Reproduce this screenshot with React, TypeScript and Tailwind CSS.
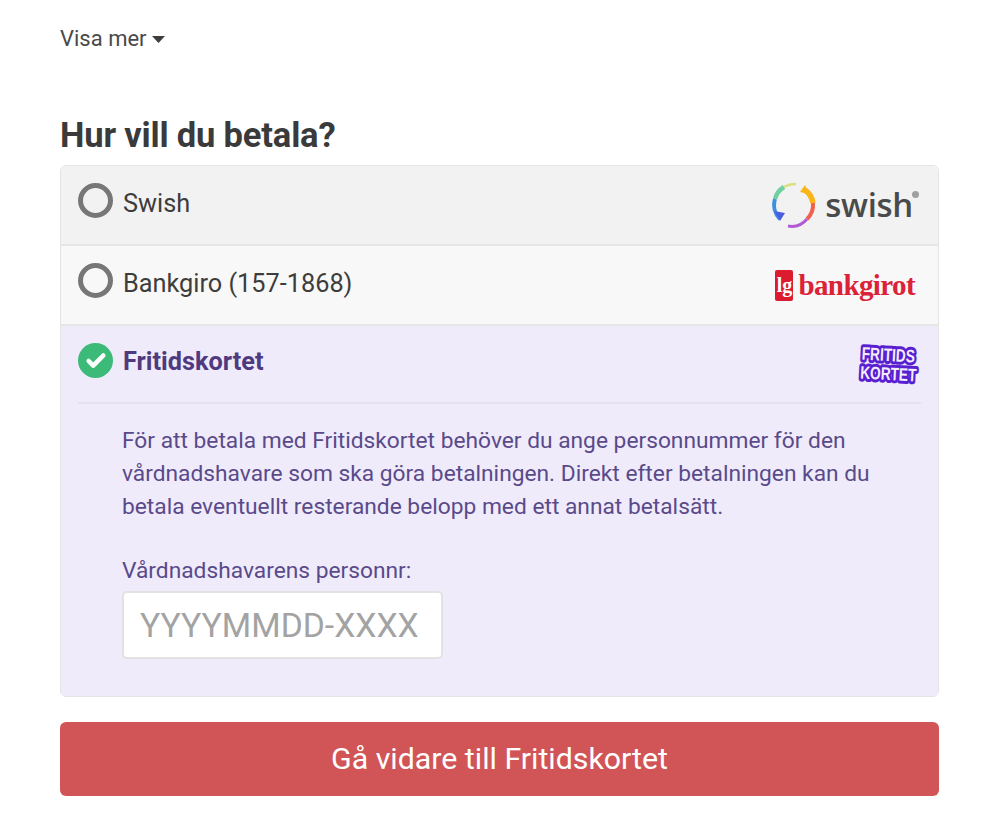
import React from 'react';
import { Check } from 'lucide-react';

const SwishLogo = () => (
  <div className="mr-[4px] flex items-center gap-[9px]">
    <svg width="44" height="46" viewBox="0 0 44 46" fill="none" strokeWidth="4.5">
      <path d="M8 37 A20 20 0 0 1 3 17" stroke="#3f8fe0" strokeWidth="4" />
      <path d="M3 17 A20 20 0 0 1 12 5" stroke="#6fd0a0" />
      <path d="M12 5 A20 20 0 0 1 24 2" stroke="#dcdf80" strokeWidth="2.5" />
      <path d="M33 8 A20 20 0 0 1 41 21" stroke="#fbb416" strokeWidth="5.5" />
      <path d="M41 21 A20 20 0 0 1 35 37" stroke="#f0604c" strokeWidth="4" />
      <path d="M35 37 A20 20 0 0 1 16 44" stroke="#b25ad6" strokeWidth="3" />
      <path d="M2 29 L13 31 L8 39 Z" fill="#4a5fe0" stroke="none" />
      <path d="M28 10 L33 3 L37 12 Z" fill="#fbb416" stroke="none" />
    </svg>
    <span className="relative mb-[2px] font-['Open_Sans',sans-serif] text-[33px] font-semibold leading-none tracking-[-0.3px] text-[#4a4a4a]">
      swish
      <span className="absolute right-[-6px] top-[3px] h-[7px] w-[7px] rounded-full bg-[#a0a0a0]" />
    </span>
  </div>
);

const BankgirotLogo = () => (
  <div className="mr-[2px] flex items-center gap-[5px]">
    <div className="flex h-[31px] w-[18px] items-center justify-center rounded-[2px] bg-[#dc1c2e] font-['Liberation_Serif',serif] text-[20px] font-bold leading-none text-white">
      lg
    </div>
    <span className="font-['Liberation_Serif',serif] text-[29px] font-bold leading-none tracking-[-0.6px] text-[#dc2238]">
      bankgirot
    </span>
  </div>
);

const FritidsLogo = () => (
  <svg width="66" height="44" viewBox="0 0 66 44" className="font-['Liberation_Sans',sans-serif] font-bold">
    <text transform="translate(33 19) rotate(3) scale(0.76 1)" textAnchor="middle" fontSize="18" fill="#f2eefd" stroke="#5a1fd0" strokeWidth="6" strokeLinejoin="round" style={{ paintOrder: 'stroke' }}>
      FRITIDS
    </text>
    <text transform="translate(33 38) rotate(3) scale(0.76 1)" textAnchor="middle" fontSize="18" fill="#f2eefd" stroke="#5a1fd0" strokeWidth="6" strokeLinejoin="round" style={{ paintOrder: 'stroke' }}>
      KORTET
    </text>
  </svg>
);

const Radio = () => (
  <span className="h-[35px] w-[35px] shrink-0 rounded-full border-[5px] border-[#777777]" />
);

const Row = ({ label, logo, bg }: { label: string; logo: React.ReactNode; bg: string }) => (
  <div className={`flex h-[80px] items-center justify-between border-b-2 border-[#e6e6e6] pl-[17px] pr-[21px] ${bg}`}>
    <div className="flex items-center gap-[10px] pb-[9px]">
      <Radio />
      <span className="pt-[7px] text-[25.3px] text-[#3d3d3d]">{label}</span>
    </div>
    {logo}
  </div>
);

export default function App() {
  return (
    <div className="h-[837px] bg-white pl-[60px] pr-[61px] pt-[24px] font-['Roboto',sans-serif]">
      <div className="flex h-[28px] items-center gap-[5px] text-[22px] text-[#4a4a4a]">
        Visa mer
        <svg width="13" height="7" viewBox="0 0 13 7" className="mt-[2px]">
          <path d="M0 0 H13 L6.5 7 Z" fill="#3d3d3d" />
        </svg>
      </div>

      <h2 className="mt-[59px] text-[34.6px] font-bold leading-[48px] tracking-[-0.2px] text-[#3a3a3a]">
        Hur vill du betala?
      </h2>

      <div className="mt-[6px] overflow-hidden rounded-[6px] border border-[#e4e4e4]">
        <Row label="Swish" logo={<SwishLogo />} bg="bg-[#f2f2f2]" />
        <Row label="Bankgiro (157-1868)" logo={<BankgirotLogo />} bg="bg-[#f8f8f8]" />

        <div className="h-[370px] bg-[#efebfb] px-[17px]">
          <div className="flex h-[78px] items-center justify-between border-b-2 border-[#e4e1ee]">
            <div className="flex items-center gap-[10px] pb-[7px]">
              <span className="flex h-[35px] w-[35px] items-center justify-center rounded-full bg-[#3cbb78]">
                <Check size={22} strokeWidth={5} className="text-white" />
              </span>
              <span className="pt-[3px] text-[25.3px] font-bold text-[#4f3a80]">Fritidskortet</span>
            </div>
            <FritidsLogo />
          </div>

          <div className="pl-[44px] pt-[20px] text-[#5a4a8a]">
            <p className="text-[22.75px] leading-[33px]">
              För att betala med Fritidskortet behöver du ange personnummer för den
              <br />
              vårdnadshavare som ska göra betalningen. Direkt efter betalningen kan du
              <br />
              betala eventuellt resterande belopp med ett annat betalsätt.
            </p>
            <label className="mt-[34px] block text-[22.75px] leading-[28px]">Vårdnadshavarens personnr:</label>
            <input
              readOnly
              placeholder="YYYYMMDD-XXXX"
              className="mt-[6px] h-[68px] w-[321px] rounded-[5px] border-2 border-[#e2e2e2] bg-white px-[16px] text-[33.7px] placeholder:text-[#a3a3a3]"
            />
          </div>
        </div>
      </div>

      <button className="mt-[25px] flex h-[74px] w-full items-center justify-center rounded-[6px] bg-[#d15556] text-[30.3px] text-white">
        Gå vidare till Fritidskortet
      </button>
    </div>
  );
}
